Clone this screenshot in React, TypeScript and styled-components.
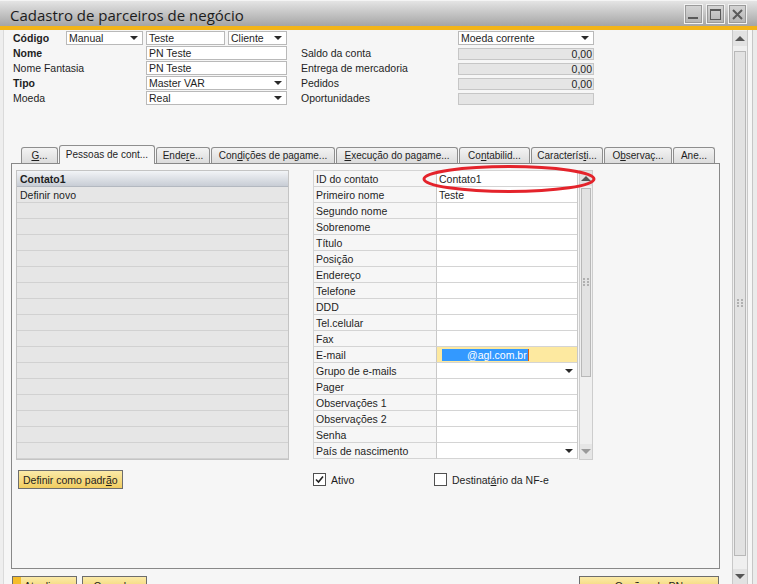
import React from "react";
import styled, { createGlobalStyle } from "styled-components";

const GlobalStyle = createGlobalStyle`
  html, body {
    margin: 0;
    padding: 0;
    background: #f6f6f6;
  }
  * {
    box-sizing: border-box;
  }
`;

const Window = styled.div`
  width: 757px;
  height: 584px;
  overflow: hidden;
  display: flex;
  flex-direction: column;
  background: #f6f6f6;
  font-family: "Liberation Sans", Arial, sans-serif;
  font-size: 10.5px;
  color: #1e1e1e;
`;

const TitleBar = styled.div`
  height: 30px;
  flex: none;
  display: flex;
  align-items: center;
  justify-content: space-between;
  padding: 0 10px 0 10px;
  background: linear-gradient(#e4e4e4, #a5a5a5);
  border-top: 1px solid #f4f4f4;
  border-bottom: 4px solid #f2b418;
`;

const Title = styled.div`
  font-family: "Open Sans", "Liberation Sans", sans-serif;
  font-size: 15px;
  color: #1c1c1c;
  margin-top: 2px;
`;

const WinButtons = styled.div`
  display: flex;
  gap: 3px;
  margin-top: 1px;
`;

const WinButton = styled.div`
  width: 19px;
  height: 20px;
  border: 1px solid #f2f2f2;
  outline: 1px solid #9a9a9a;
  outline-offset: -2px;
  background: linear-gradient(#d6d6d6, #b4b4b4);
  display: flex;
  align-items: center;
  justify-content: center;
`;

const Body = styled.div`
  flex: 1;
  min-height: 0;
  display: flex;
  box-shadow: inset 3px 0 0 #eeeeee, inset 4px 0 0 #dadada;
`;

const Main = styled.div`
  flex: 1;
  display: flex;
  flex-direction: column;
  padding: 1px 0 0 11px;
  & > * {
    flex: none;
  }
`;

const HeaderForm = styled.div`
  margin-left: 2px;
  display: grid;
  grid-template-columns: 53px 77px 3px 79px 3px 59px 14px 157px 136px;
  grid-auto-rows: 15px;
  align-items: start;
`;

const Label = styled.div<{ $col: string; $bold?: boolean }>`
  grid-column: ${(p) => p.$col};
  height: 14px;
  display: flex;
  align-items: center;
  font-weight: ${(p) => (p.$bold ? 700 : 400)};
  white-space: nowrap;
`;

const Field = styled.div<{ $col: string }>`
  grid-column: ${(p) => p.$col};
  height: 14px;
  background: #fff;
  border: 1px solid #b9b9b9;
  display: flex;
  align-items: center;
  padding: 0 4px 0 2px;
  white-space: nowrap;
`;

const ReadOnly = styled.div<{ $col: string }>`
  grid-column: ${(p) => p.$col};
  height: 12px;
  margin-top: 2px;
  background: #e5e5e5;
  border: 1px solid #c6c6c6;
  display: flex;
  align-items: center;
  justify-content: flex-end;
  padding-right: 1px;
`;

const Caret = styled.span<{ $color?: string }>`
  margin-left: auto;
  width: 0;
  height: 0;
  border-left: 4px solid transparent;
  border-right: 4px solid transparent;
  border-top: 4px solid ${(p) => p.$color || "#2a2a2a"};
`;

const TabStrip = styled.div`
  margin-top: 39px;
  height: 18px;
  display: flex;
  align-items: flex-end;
  gap: 1px;
  padding-left: 10px;
  position: relative;
  z-index: 1;
`;

const Tab = styled.div<{ $w: number; $active?: boolean }>`
  width: ${(p) => p.$w}px;
  height: ${(p) => (p.$active ? 19 : 16)}px;
  margin-bottom: ${(p) => (p.$active ? -1 : 0)}px;
  border: 1px solid #8e8e8e;
  border-bottom: none;
  border-radius: 3px 3px 0 0;
  background: ${(p) =>
    p.$active ? "#f6f6f6" : "linear-gradient(#f3f3f3, #dcdcdc)"};
  display: flex;
  align-items: center;
  justify-content: center;
  white-space: nowrap;
  overflow: hidden;
  font-size: 10px;
  padding-bottom: ${(p) => (p.$active ? 2 : 0)}px;
`;

const U = styled.span`
  text-decoration: underline;
`;

const Panel = styled.div`
  width: 709px;
  height: 406px;
  border: 1px solid #888888;
  padding: 6px 0 0 4px;
  display: grid;
  grid-template-columns: 273px 280px;
  grid-template-rows: 290px auto;
  align-content: start;
  align-items: start;
  column-gap: 24px;
  row-gap: 10px;
`;

const List = styled.div`
  border: 1px solid #c4c4c4;
  background: #e6e6e6;
  display: flex;
  flex-direction: column;
  height: 290px;
`;

const ListHeader = styled.div`
  height: 16px;
  flex: none;
  padding-left: 3px;
  display: flex;
  align-items: center;
  font-weight: 700;
  background: linear-gradient(#f2f4f7, #c8cdd5);
  border-bottom: 1px solid #b3b8c0;
`;

const ListRow = styled.div`
  height: 16px;
  flex: none;
  padding-left: 3px;
  display: flex;
  align-items: center;
  border-bottom: 1px solid #d1d1d1;
`;

const PropTable = styled.div`
  position: relative;
  display: flex;
  height: 290px;
`;

const PropRows = styled.div`
  display: grid;
  grid-template-columns: 123px 141px;
  grid-auto-rows: 16px;
  border-top: 1px solid #d4d4d4;
  border-right: 1px solid #c8c8c8;
  align-self: start;
`;

const PropLabel = styled.div`
  border-left: 1px solid #d4d4d4;
  border-bottom: 1px solid #d4d4d4;
  padding-left: 2px;
  display: flex;
  align-items: center;
  white-space: nowrap;
`;

const PropValue = styled.div<{ $hl?: boolean }>`
  background: ${(p) => (p.$hl ? "#fde9a0" : "#ffffff")};
  border-left: 1px solid #c8c8c8;
  border-bottom: 1px solid #d4d4d4;
  padding: 0 4px 0 2px;
  display: flex;
  align-items: center;
  white-space: nowrap;
`;

const Selection = styled.span`
  margin-left: 3px;
  height: 12px;
  background: #3399ff;
  color: #fff;
  padding: 0 1px 0 25px;
  display: flex;
  align-items: center;
  border-right: 1px solid #e05a10;
`;

const MiniScroll = styled.div`
  width: 16px;
  margin-left: 1px;
  height: 290px;
  border: 1px solid #cdcdcd;
  background: #f0f0f0;
  display: flex;
  flex-direction: column;
`;

const ArrowBox = styled.div<{ $bg?: string }>`
  height: 15px;
  flex: none;
  background: ${(p) => p.$bg || "#e2e2e2"};
  display: flex;
  align-items: center;
  justify-content: center;
`;

const UpTri = styled.span<{ $color?: string }>`
  width: 0;
  height: 0;
  border-left: 5px solid transparent;
  border-right: 5px solid transparent;
  border-bottom: 5px solid ${(p) => p.$color || "#555"};
`;

const DownTri = styled.span<{ $color?: string }>`
  width: 0;
  height: 0;
  border-left: 5px solid transparent;
  border-right: 5px solid transparent;
  border-top: 5px solid ${(p) => p.$color || "#555"};
`;

const Thumb = styled.div<{ $h: number; $top?: number }>`
  height: ${(p) => p.$h}px;
  margin: ${(p) => p.$top ?? 2}px 1px 0 1px;
  flex: none;
  background: #e2e2e2;
  border: 1px solid #b8b8b8;
  display: flex;
  align-items: center;
  justify-content: center;
`;

const Spacer = styled.div`
  flex: 1;
`;

const Ellipse = styled.svg`
  position: absolute;
  left: 109px;
  top: -6px;
  pointer-events: none;
`;

const LeftActions = styled.div`
  padding-left: 2px;
`;

const YellowButton = styled.div<{ $w?: number; $default?: boolean }>`
  ${(p) => (p.$w ? `width: ${p.$w}px;` : "")}
  height: 19px;
  display: inline-flex;
  align-items: center;
  justify-content: center;
  padding: 0 4px;
  border: 1px solid #6d6d6d;
  background: ${(p) =>
    p.$default
      ? "linear-gradient(90deg, #f5bd2c 0 8px, transparent 8px), linear-gradient(#fbeaa8, #f1cd60)"
      : "linear-gradient(#fbeaa8, #f1cd60)"};
  white-space: nowrap;
  color: #1e1e1e;
`;

const CheckRow = styled.div`
  padding-top: 3px;
  display: flex;
  align-items: center;
`;

const CheckItem = styled.div<{ $w?: number }>`
  ${(p) => (p.$w ? `width: ${p.$w}px;` : "")}
  display: flex;
  align-items: center;
  gap: 5px;
`;

const Box = styled.span`
  width: 13px;
  height: 13px;
  border: 1px solid #505050;
  background: #fff;
  display: flex;
  align-items: center;
  justify-content: center;
`;

const BottomBar = styled.div`
  margin-top: 7px;
  width: 709px;
  display: flex;
  gap: 5px;
  padding: 0 1px;
`;

const PushRight = styled.div`
  margin-left: auto;
`;

const ScrollCol = styled.div`
  width: 17px;
  margin-left: 12px;
  padding-top: 1px;
  border-left: 1px solid #c8c8c8;
  border-right: 1px solid #c8c8c8;
  background: #efefef;
  display: flex;
  flex-direction: column;
`;

const RightFrame = styled.div`
  width: 9px;
  background: linear-gradient(90deg, #f6f6f6 0 4px, #c6c6c6 4px 5px, #ebebeb 5px);
`;

const Grip = () => (
  <svg width="6" height="9" viewBox="0 0 6 9">
    {[0, 3, 6].map((y) =>
      [0, 4].map((x) => (
        <rect key={`${x}-${y}`} x={x} y={y} width="2" height="2" fill="#b0b0b0" />
      ))
    )}
  </svg>
);

const tabs: { w: number; label: React.ReactNode; active?: boolean }[] = [
  { w: 37, label: (<><U>G</U>...</>) },
  { w: 96, label: "Pessoas de cont...", active: true },
  { w: 54, label: (<>Ende<U>r</U>e...</>) },
  { w: 124, label: (<>Con<U>d</U>ições de pagame...</>) },
  { w: 122, label: (<><U>E</U>xecução do pagame...</>) },
  { w: 71, label: (<>Co<U>n</U>tabilid...</>) },
  { w: 72, label: (<>Caracterís<U>t</U>i...</>) },
  { w: 68, label: (<>O<U>b</U>servaç...</>) },
  { w: 42, label: "Ane..." },
];

const props: { label: string; value?: React.ReactNode; hl?: boolean; drop?: boolean }[] = [
  { label: "ID do contato", value: "Contato1" },
  { label: "Primeiro nome", value: "Teste" },
  { label: "Segundo nome" },
  { label: "Sobrenome" },
  { label: "Título" },
  { label: "Posição" },
  { label: "Endereço" },
  { label: "Telefone" },
  { label: "DDD" },
  { label: "Tel.celular" },
  { label: "Fax" },
  { label: "E-mail", value: <Selection>@agl.com.br</Selection>, hl: true },
  { label: "Grupo de e-mails", drop: true },
  { label: "Pager" },
  { label: "Observações 1" },
  { label: "Observações 2" },
  { label: "Senha" },
  { label: "País de nascimento", drop: true },
];

const App = () => {
  return (
    <>
      <GlobalStyle />
      <Window>
        <TitleBar>
          <Title>Cadastro de parceiros de negócio</Title>
          <WinButtons>
            <WinButton>
              <svg width="11" height="11" viewBox="0 0 11 11">
                <rect x="0" y="8" width="10" height="2" fill="#5a5a5a" />
              </svg>
            </WinButton>
            <WinButton>
              <svg width="11" height="11" viewBox="0 0 11 11">
                <rect x="0.5" y="0.5" width="10" height="10" fill="none" stroke="#5a5a5a" />
                <rect x="0.5" y="0.5" width="10" height="1.5" fill="#5a5a5a" />
              </svg>
            </WinButton>
            <WinButton>
              <svg width="11" height="11" viewBox="0 0 11 11">
                <path d="M1 1 L10 10 M10 1 L1 10" stroke="#5a5a5a" strokeWidth="2" />
              </svg>
            </WinButton>
          </WinButtons>
        </TitleBar>

        <Body>
          <Main>
            <HeaderForm>
              <Label $col="1" $bold>Código</Label>
              <Field $col="2">Manual<Caret /></Field>
              <Field $col="4">Teste</Field>
              <Field $col="6">Cliente<Caret /></Field>
              <Field $col="9">Moeda corrente<Caret /></Field>

              <Label $col="1 / 4" $bold>Nome</Label>
              <Field $col="4 / 7">PN Teste</Field>
              <Label $col="8">Saldo da conta</Label>
              <ReadOnly $col="9">0,00</ReadOnly>

              <Label $col="1 / 4">Nome Fantasia</Label>
              <Field $col="4 / 7">PN Teste</Field>
              <Label $col="8">Entrega de mercadoria</Label>
              <ReadOnly $col="9">0,00</ReadOnly>

              <Label $col="1 / 4" $bold>Tipo</Label>
              <Field $col="4 / 7">Master VAR<Caret /></Field>
              <Label $col="8">Pedidos</Label>
              <ReadOnly $col="9">0,00</ReadOnly>

              <Label $col="1 / 4">Moeda</Label>
              <Field $col="4 / 7">Real<Caret /></Field>
              <Label $col="8">Oportunidades</Label>
              <ReadOnly $col="9" />
            </HeaderForm>

            <TabStrip>
              {tabs.map((t, i) => (
                <Tab key={i} $w={t.w} $active={t.active}>
                  {t.label}
                </Tab>
              ))}
            </TabStrip>

            <Panel>
              <List>
                <ListHeader>Contato1</ListHeader>
                <ListRow>Definir novo</ListRow>
                {Array.from({ length: 16 }).map((_, i) => (
                  <ListRow key={i} />
                ))}
              </List>

              <PropTable>
                <PropRows>
                  {props.map((r) => (
                    <React.Fragment key={r.label}>
                      <PropLabel>{r.label}</PropLabel>
                      <PropValue $hl={r.hl}>
                        {r.value}
                        {r.drop && <Caret />}
                      </PropValue>
                    </React.Fragment>
                  ))}
                </PropRows>
                <MiniScroll>
                  <ArrowBox>
                    <UpTri />
                  </ArrowBox>
                  <Thumb $h={189}>
                    <Grip />
                  </Thumb>
                  <Spacer />
                  <ArrowBox $bg="#e6e6e6">
                    <DownTri $color="#9a9a9a" />
                  </ArrowBox>
                </MiniScroll>
                <Ellipse width="176" height="30" viewBox="0 0 176 30">
                  <ellipse cx="87" cy="15" rx="85" ry="12.5" fill="none" stroke="#e4232b" strokeWidth="3" />
                </Ellipse>
              </PropTable>

              <LeftActions>
                <YellowButton>
                  <span>
                    Definir como padr<U>ã</U>o
                  </span>
                </YellowButton>
              </LeftActions>

              <CheckRow>
                <CheckItem $w={121}>
                  <Box>
                    <svg width="9" height="9" viewBox="0 0 9 9">
                      <path d="M1 4.5 L3.5 7 L8 1.5" fill="none" stroke="#222" strokeWidth="1.6" />
                    </svg>
                  </Box>
                  <span>Ativo</span>
                </CheckItem>
                <CheckItem>
                  <Box />
                  <span>
                    Destinat<U>á</U>rio da NF-e
                  </span>
                </CheckItem>
              </CheckRow>
            </Panel>

            <BottomBar>
              <YellowButton $w={65} $default>
                Atualizar
              </YellowButton>
              <YellowButton $w={65}>Cancelar</YellowButton>
              <PushRight>
                <YellowButton $w={140}>Opções do PN</YellowButton>
              </PushRight>
            </BottomBar>
          </Main>

          <ScrollCol>
            <ArrowBox>
              <UpTri />
            </ArrowBox>
            <Thumb $h={505} $top={5}>
              <Grip />
            </Thumb>
            <Spacer />
            <ArrowBox>
              <DownTri />
            </ArrowBox>
          </ScrollCol>
          <RightFrame />
        </Body>
      </Window>
    </>
  );
};

export default App;
